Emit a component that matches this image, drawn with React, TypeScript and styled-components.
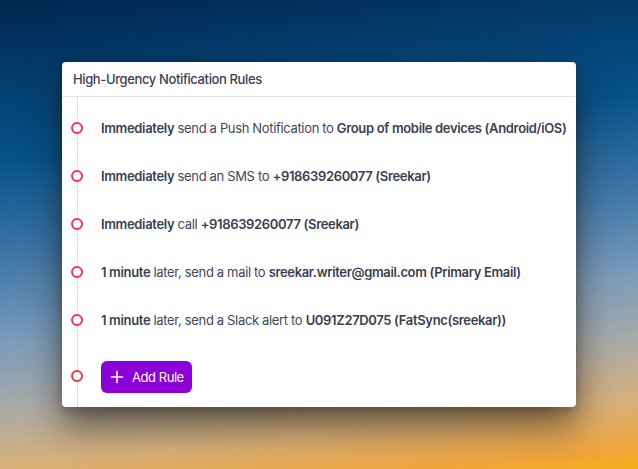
import * as React from 'react';
import styled, { createGlobalStyle } from 'styled-components';

const GlobalStyle = createGlobalStyle`
  html, body {
    margin: 0;
    padding: 0;
    height: 100%;
  }
  body {
    font-family: Inter, "Noto Sans", sans-serif;
  }
  #root {
    height: 100%;
  }
`;

const Page = styled.div`
  width: 638px;
  height: 469px;
  box-sizing: border-box;
  padding: 62px 62px 0 62px;
  background: linear-gradient(
    174deg,
    #01264f 0%,
    #05528a 30%,
    #3f76a8 48%,
    #7c9cba 64%,
    #a8aaa8 76%,
    #d6b07a 87%,
    #f0a43a 96%,
    #f6b018 100%
  );
  overflow: hidden;
`;

const Card = styled.div`
  width: 514px;
  background: #ffffff;
  border-radius: 4px;
  box-shadow: 0 18px 36px rgba(30, 20, 8, 0.6), 0 4px 10px rgba(0, 0, 0, 0.2);
  overflow: hidden;
`;

const Header = styled.div`
  height: 34px;
  display: flex;
  align-items: center;
  padding: 0 11px;
  border-bottom: 1px solid #e3e4ea;
  font-size: 13px;
  font-weight: 500;
  letter-spacing: -0.38px;
  color: #3b4056;
`;

const Timeline = styled.div`
  position: relative;
  padding: 7px 0 14px 0;

  &::before {
    content: '';
    position: absolute;
    left: 15px;
    top: 0;
    bottom: 0;
    width: 1px;
    background: #dedfe4;
  }
`;

const Row = styled.div<{ $tall?: boolean }>`
  position: relative;
  display: flex;
  align-items: center;
  height: ${p => (p.$tall ? '32px' : '48px')};
  margin-top: ${p => (p.$tall ? '17px' : '0')};
  padding-left: 39px;
  font-size: 13px;
  letter-spacing: -0.34px;
  color: #42475c;
  white-space: nowrap;
`;

const Dot = styled.span<{ $offset?: number }>`
  position: absolute;
  left: 9px;
  top: calc(50% - 6px + ${p => p.$offset ?? 0}px);
  width: 8px;
  height: 8px;
  border: 2px solid #f0364d;
  border-radius: 50%;
  background: #ffffff;
`;

const Strong = styled.b`
  font-weight: 600;
  color: #3a3f55;
`;

const AddButton = styled.button`
  display: flex;
  align-items: center;
  gap: 8px;
  height: 32px;
  padding: 0 8px 0 9px;
  border: none;
  border-radius: 6px;
  background: #8a00d6;
  color: #ffffff;
  font-family: Inter, "Noto Sans", sans-serif;
  font-size: 13px;
  font-weight: 400;
  letter-spacing: -0.45px;
  cursor: pointer;
`;

const rules: { parts: [string, boolean][] }[] = [
  { parts: [['Immediately', true], [' send a Push Notification to ', false], ['Group of mobile devices (Android/iOS)', true]] },
  { parts: [['Immediately', true], [' send an SMS to ', false], ['+918639260077 (Sreekar)', true]] },
  { parts: [['Immediately', true], [' call ', false], ['+918639260077 (Sreekar)', true]] },
  { parts: [['1 minute', true], [' later, send a mail to ', false], ['sreekar.writer@gmail.com (Primary Email)', true]] },
  { parts: [['1 minute', true], [' later, send a Slack alert to ', false], ['U091Z27D075 (FatSync(sreekar))', true]] },
];

export default function App() {
  return (
    <>
      <GlobalStyle />
      <Page>
        <Card>
          <Header>High-Urgency Notification Rules</Header>
          <Timeline>
            {rules.map((r, i) => (
              <Row key={i}>
                <Dot $offset={0} />
                <span>
                  {r.parts.map(([t, b], j) => (b ? <Strong key={j}>{t}</Strong> : <React.Fragment key={j}>{t}</React.Fragment>))}
                </span>
              </Row>
            ))}
            <Row $tall>
              <Dot $offset={-1} />
              <AddButton>
                <svg width="14" height="14" viewBox="0 0 14 14" fill="none">
                  <path d="M7 1.5v11M1.5 7h11" stroke="#ffffff" strokeWidth="1.6" strokeLinecap="round" />
                </svg>
                Add Rule
              </AddButton>
            </Row>
          </Timeline>
        </Card>
      </Page>
    </>
  );
}
